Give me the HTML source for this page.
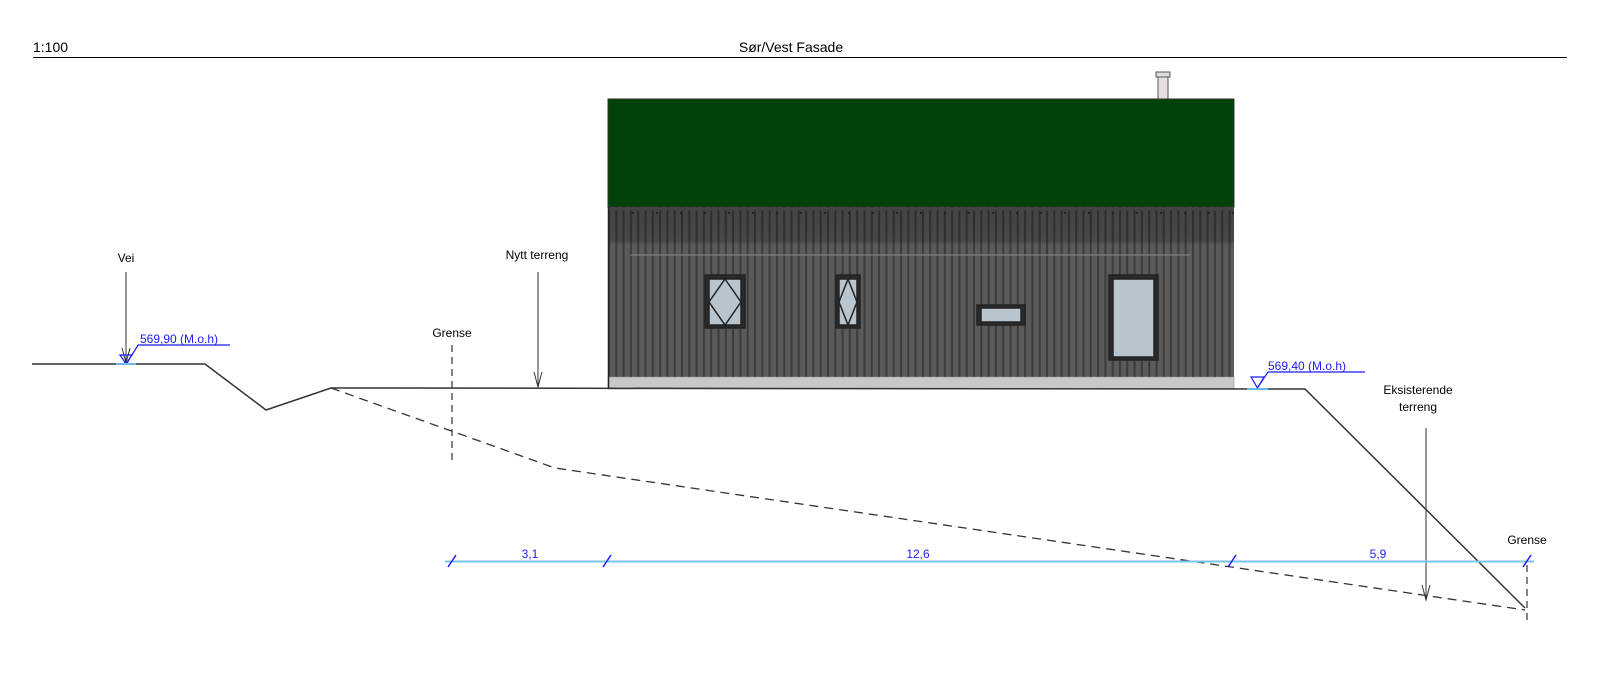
<!DOCTYPE html>
<html><head><meta charset="utf-8"><style>
html,body{margin:0;padding:0;background:#fff;}
svg{display:block;font-family:"Liberation Sans",sans-serif;}
</style></head><body>
<svg width="1600" height="697" viewBox="0 0 1600 697" xmlns="http://www.w3.org/2000/svg">
<defs>
<pattern id="st" x="608" y="0" width="7.3" height="10" patternUnits="userSpaceOnUse">
<rect width="7.3" height="10" fill="#5a5a5a"/>
<rect x="0" width="2" height="10" fill="#3c3c3c"/>
</pattern>
<linearGradient id="sh" x1="0" y1="0" x2="0" y2="1">
<stop offset="0" stop-color="#000" stop-opacity="0.25"/>
<stop offset="0.2" stop-color="#000" stop-opacity="0.2"/>
<stop offset="0.22" stop-color="#000" stop-opacity="0"/>
<stop offset="1" stop-color="#000" stop-opacity="0"/>
</linearGradient>
</defs>
<text x="33" y="52" font-size="14" fill="#000">1:100</text>
<text x="791" y="52" font-size="14" fill="#000" text-anchor="middle">Sør/Vest Fasade</text>
<line x1="33" y1="57.5" x2="1567" y2="57.5" stroke="#000" stroke-width="1"/>
<!-- chimney -->
<rect x="1158" y="75" width="10" height="25" fill="#e8e0e0" stroke="#555" stroke-width="1"/>
<rect x="1156" y="72" width="14" height="5" fill="#ddd" stroke="#555" stroke-width="1"/>
<!-- roof -->
<rect x="608" y="99" width="626" height="108" fill="#02420a" stroke="#333" stroke-width="1"/>
<!-- wall -->
<rect x="608" y="207" width="626" height="170" fill="url(#st)"/>
<rect x="608" y="207" width="626" height="170" fill="url(#sh)"/>
<line x1="608" y1="213" x2="1234" y2="213" stroke="#222" stroke-width="2" stroke-dasharray="2 22"/>
<line x1="608" y1="209" x2="1234" y2="209" stroke="#444" stroke-width="3"/>
<line x1="630" y1="255" x2="1190" y2="255" stroke="#888" stroke-width="1"/>
<rect x="608" y="377" width="626" height="12" fill="#c8c8c8" stroke="#888" stroke-width="0.5"/>
<line x1="608.5" y1="207" x2="608.5" y2="389" stroke="#222" stroke-width="1.5"/>
<!-- windows -->
<g stroke="#222" stroke-width="1.5">
<rect x="705" y="275" width="40" height="53" fill="#2a2a2a"/>
<rect x="709" y="279" width="32" height="46" fill="#b8c5cf"/>
<polygon points="725,279 741,302 725,325 709,302" fill="none"/>
<rect x="836" y="275" width="24" height="53" fill="#2a2a2a"/>
<rect x="839" y="279" width="18" height="46" fill="#b8c5cf"/>
<polygon points="848,279 857,302 848,325 839,302" fill="none"/>
<rect x="977" y="305" width="48" height="20" fill="#2a2a2a"/>
<rect x="981" y="308" width="40" height="14" fill="#b8c5cf"/>
<rect x="1109" y="275" width="49" height="85" fill="#2a2a2a"/>
<rect x="1113" y="279" width="41" height="78" fill="#b8c5cf"/>
</g>
<!-- terrain -->
<polyline points="32,364 205,364 266,410 331,388 1305,389 1525,608" fill="none" stroke="#333" stroke-width="1.5"/>
<polyline points="331,388 555,468 1525,610" fill="none" stroke="#333" stroke-width="1.3" stroke-dasharray="9 6"/>
<line x1="452" y1="345" x2="452" y2="460" stroke="#333" stroke-width="1.2" stroke-dasharray="7 5"/>
<line x1="1527" y1="565" x2="1527" y2="625" stroke="#333" stroke-width="1.2" stroke-dasharray="7 5"/>
<!-- labels arrows -->
<g stroke="#333" stroke-width="1" fill="none">
<line x1="126" y1="272" x2="126" y2="363"/><polyline points="122,348 126,363 130,348"/>
<line x1="538" y1="272" x2="538" y2="387"/><polyline points="534,372 538,387 542,372"/>
<line x1="1426" y1="428" x2="1426" y2="600"/><polyline points="1422,585 1426,600 1430,585"/>
</g>
<g font-size="12" fill="#000" text-anchor="middle">
<text x="126" y="262">Vei</text>
<text x="537" y="259">Nytt terreng</text>
<text x="452" y="337">Grense</text>
<text x="1418" y="394">Eksisterende</text>
<text x="1418" y="411">terreng</text>
<text x="1527" y="544">Grense</text>
</g>
<!-- level markers -->
<g stroke="#1a1aff" stroke-width="1.2" fill="none">
<polygon points="120,355 132,355 126,364"/>
<polyline points="127,363 138,345 230,345"/>
<polygon points="1251,377 1264,377 1257.5,388"/>
<polyline points="1258,387 1268,372 1365,372"/>
</g>
<line x1="116" y1="364" x2="136" y2="364" stroke="#6ab4f0" stroke-width="2"/>
<line x1="1247" y1="389" x2="1268" y2="389" stroke="#6ab4f0" stroke-width="2"/>
<g font-size="12" fill="#1a1aff">
<text x="140" y="343">569,90 (M.o.h)</text>
<text x="1268" y="370">569,40 (M.o.h)</text>
</g>
<!-- dimension -->
<line x1="445" y1="561.5" x2="1534" y2="561.5" stroke="#7cc3f0" stroke-width="2"/>
<g stroke="#1a1aff" stroke-width="1.5">
<line x1="448" y1="567" x2="456" y2="555"/>
<line x1="603" y1="567" x2="611" y2="555"/>
<line x1="1228" y1="567" x2="1236" y2="555"/>
<line x1="1523" y1="567" x2="1531" y2="555"/>
</g>
<g font-size="12" fill="#1a1aff" text-anchor="middle">
<text x="530" y="558">3,1</text>
<text x="918" y="558">12,6</text>
<text x="1378" y="558">5,9</text>
</g>
</svg>
</body></html>
